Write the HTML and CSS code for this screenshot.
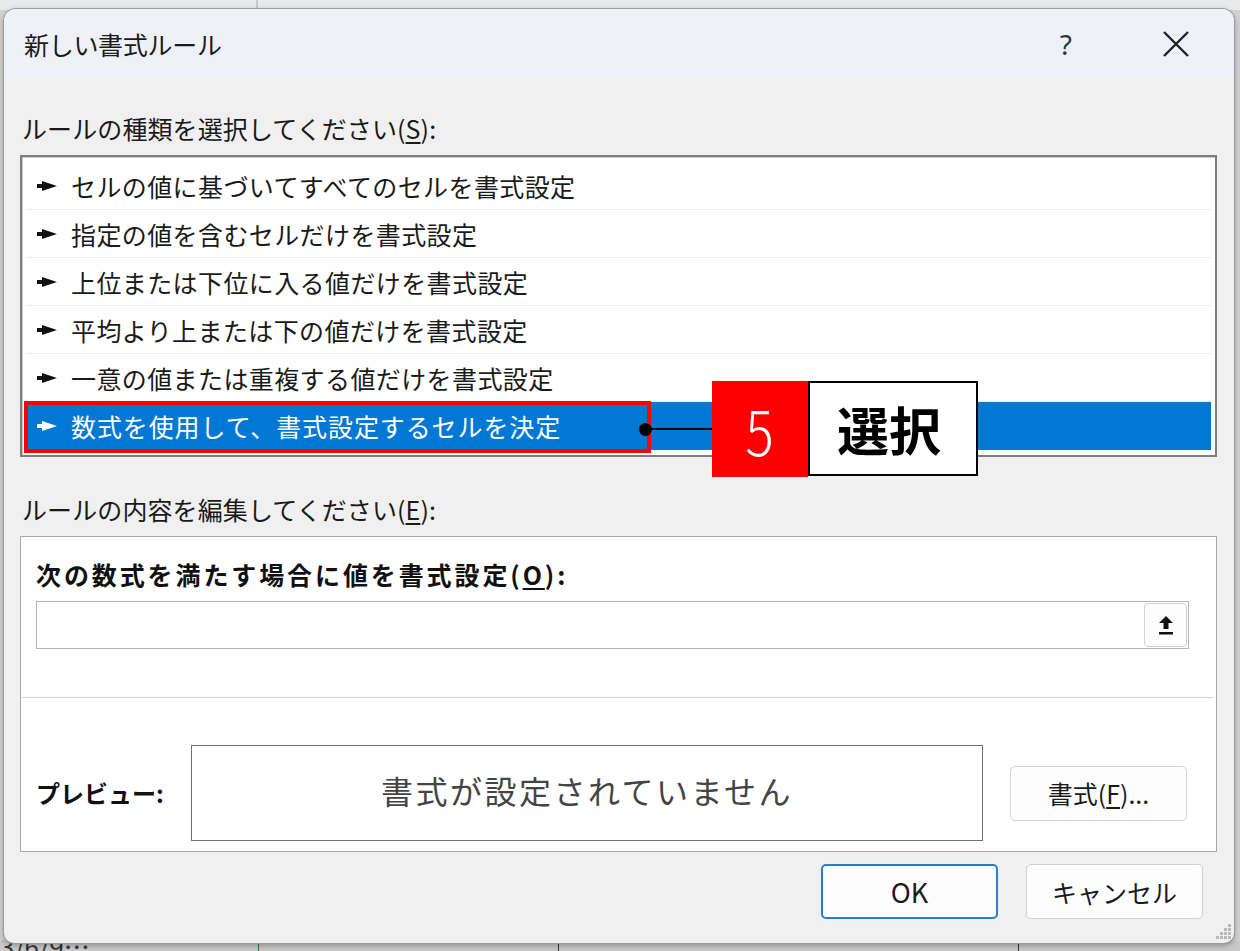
FILE: index.html
```html
<!DOCTYPE html>
<html lang="ja">
<head>
<meta charset="utf-8">
<title>新しい書式ルール</title>
<link rel="stylesheet" href="styles.css">
</head>
<body>
<div class="sheet">
  <div class="sheet-top"></div>
  <div class="sheet-bottom"><span class="sheet-text">3/6/9…</span></div>
</div>
<div class="dialog">
  <div class="titlebar">
    <div class="title">新しい書式ルール</div>
    <div class="tb-buttons">
      <span class="help">?</span>
      <svg class="close" width="28" height="28" viewBox="0 0 28 28"><path d="M2 2 L26 26 M26 2 L2 26" stroke="#222" stroke-width="2.4" fill="none"/></svg>
    </div>
  </div>
  <div class="body">
    <div class="label">ルールの種類を選択してください(<u>S</u>):</div>
    <div class="listbox">
      <div class="row"><svg class="ptr" viewBox="0 0 20 10"><path d="M0 3 H5 V0 L20 5 L5 10 V7 H0 Z"/></svg>セルの値に基づいてすべてのセルを書式設定</div>
      <div class="row"><svg class="ptr" viewBox="0 0 20 10"><path d="M0 3 H5 V0 L20 5 L5 10 V7 H0 Z"/></svg>指定の値を含むセルだけを書式設定</div>
      <div class="row"><svg class="ptr" viewBox="0 0 20 10"><path d="M0 3 H5 V0 L20 5 L5 10 V7 H0 Z"/></svg>上位または下位に入る値だけを書式設定</div>
      <div class="row"><svg class="ptr" viewBox="0 0 20 10"><path d="M0 3 H5 V0 L20 5 L5 10 V7 H0 Z"/></svg>平均より上または下の値だけを書式設定</div>
      <div class="row"><svg class="ptr" viewBox="0 0 20 10"><path d="M0 3 H5 V0 L20 5 L5 10 V7 H0 Z"/></svg>一意の値または重複する値だけを書式設定</div>
      <div class="row selected"><svg class="ptr" viewBox="0 0 20 10"><path d="M0 3 H5 V0 L20 5 L5 10 V7 H0 Z"/></svg>数式を使用して、書式設定するセルを決定</div>
      <div class="redbox"></div>
      <div class="callout">
        <span class="dot"></span>
        <span class="leader"></span>
        <span class="num"><span class="num-glyph">5</span></span>
        <span class="word">選択</span>
      </div>
    </div>
    <div class="label label2">ルールの内容を編集してください(<u>E</u>):</div>
    <div class="panel">
      <div class="bold-label">次の数式を満たす場合に値を書式設定(<u>O</u>):</div>
      <div class="input">
        <div class="ref-btn">
          <svg width="22" height="24" viewBox="0 0 22 24"><path d="M11 3 L18 10 H13.5 V16 H8.5 V10 H4 Z" fill="#111"/><rect x="4" y="19" width="14" height="2.5" fill="#111"/></svg>
        </div>
      </div>
      <div class="sep"></div>
      <div class="preview-row">
        <div class="bold-label prev-label">プレビュー:</div>
        <div class="preview">書式が設定されていません</div>
        <button class="btn fmt">書式(<u>F</u>)...</button>
      </div>
    </div>
    <div class="actions">
      <button class="btn ok">OK</button>
      <button class="btn">キャンセル</button>
    </div>
    <svg class="grip" width="16" height="16" viewBox="0 0 16 16" fill="#b8b8b8"><rect x="12" y="0" width="3" height="3"/><rect x="8" y="4" width="3" height="3"/><rect x="12" y="4" width="3" height="3"/><rect x="4" y="8" width="3" height="3"/><rect x="8" y="8" width="3" height="3"/><rect x="12" y="8" width="3" height="3"/><rect x="0" y="12" width="3" height="3"/><rect x="4" y="12" width="3" height="3"/><rect x="8" y="12" width="3" height="3"/><rect x="12" y="12" width="3" height="3"/></svg>
  </div>
</div>
</body>
</html>
```
FILE: styles.css
```css
* { box-sizing: border-box; }
html, body { margin: 0; padding: 0; }
body {
  width: 1240px;
  height: 951px;
  overflow: hidden;
  background: #d2d2d2;
  font-family: "Noto Sans CJK JP", "Noto Sans", sans-serif;
  color: #1a1a1a;
  position: relative;
}
.sheet { position: absolute; inset: 0; }
.sheet-top {
  height: 10px;
  background: #e9e9e9;
  background-image: linear-gradient(#c8c8c8, #c8c8c8);
  background-size: 2px 10px;
  background-position: 256px 0;
  background-repeat: no-repeat;
}
.sheet-bottom {
  position: absolute;
  left: 0; right: 0; bottom: 0;
  height: 10px;
  background: #c9c9c9;
  background-image: linear-gradient(#2e7d32, #2e7d32), linear-gradient(#333, #333), linear-gradient(#333, #333);
  background-size: 1px 10px, 1px 10px, 1px 10px;
  background-position: 258px 0, 558px 0, 1018px 0;
  background-repeat: no-repeat;
  overflow: hidden;
}
.sheet-text { position: absolute; left: 0; top: -14px; font-size: 26px; color: #333; }

.dialog {
  position: relative;
  margin: 9px 0 0 4px;
  width: 1230px;
  height: 934px;
  background: #f0f0f0;
  border-radius: 12px 12px 10px 10px;
  box-shadow: 0 0 0 1px #9a9a9a, 0 2px 6px rgba(0,0,0,0.35);
  overflow: hidden;
  display: flex;
  flex-direction: column;
}
.titlebar {
  height: 69px;
  background: #eef2f8;
  display: flex;
  align-items: center;
  justify-content: space-between;
  padding: 0 44px 0 20px;
}
.title { font-size: 25px; letter-spacing: -0.3px; color: #1a1a1a; }
.tb-buttons { display: flex; align-items: center; gap: 90px; }
.help { font-size: 28px; color: #333; font-family: "Noto Sans", sans-serif; }
.close { display: block; }

.body { flex: 1; position: relative; padding: 34px 17px 0 16px; }
.label { font-size: 25px; line-height: 32px; padding-left: 2px; color: #1a1a1a; letter-spacing: 0.1px; }
.label u, .bold-label u, .btn u { text-underline-offset: 3px; }
.listbox {
  position: relative;
  margin-top: 11px;
  height: 302px;
  background: #fff;
  border: 2px solid #7d7d7d;
  box-shadow: inset 1px 1px 0 #c8c8c8;
  padding: 5px 4px 0 4px;
}
.row {
  height: 48px;
  border-bottom: 1px solid #ececec;
  display: flex;
  align-items: center;
  font-size: 25px;
  letter-spacing: 0.4px;
  padding-left: 11px;
  color: #1a1a1a;
}
.ptr { width: 20px; height: 10px; margin-right: 14px; fill: #111; flex: none; }
.row.selected { background: #0078d4; color: #fff; border-bottom: 0; letter-spacing: 0.9px; }
.row.selected .ptr { fill: #fff; }
.redbox {
  position: absolute;
  left: 2px; top: 244px;
  width: 627px; height: 52px;
  border: 4px solid #ff0000;
}
.callout {
  position: absolute;
  left: 617px; top: 224px;
  display: flex;
  align-items: center;
  height: 96px;
}
.dot { width: 13px; height: 13px; border-radius: 50%; background: #000; flex: none; }
.leader { width: 62px; height: 2px; background: #000; flex: none; margin-left: -2px; }
.num {
  width: 96px; height: 96px;
  flex: none;
  background: #ff0000;
  color: #fff;
  display: flex; align-items: center; justify-content: center;
}
.num-glyph {
  display: block;
  font-family: "Noto Sans CJK JP", sans-serif;
  font-size: 62px;
  font-weight: 300;
  line-height: 1;
  transform: scaleX(0.85);
}
.word {
  width: 170px; height: 95px;
  flex: none;
  margin-top: -1px;
  background: #fff;
  border: 2px solid #000;
  font-size: 52px;
  font-weight: 700;
  color: #000;
  display: flex; align-items: center; justify-content: center;
  line-height: 1;
  padding-right: 8px;
}
.label2 { margin-top: 36px; }
.panel {
  margin-top: 11px;
  height: 316px;
  background: #fff;
  border: 1px solid #a9a9a9;
  padding: 22px 27px 0 15px;
}
.bold-label { font-size: 25px; font-weight: 700; line-height: 30px; color: #111; letter-spacing: 2.9px; }
.input {
  margin-top: 12px;
  height: 48px;
  border: 1px solid #b5b5b5;
  display: flex;
  justify-content: flex-end;
  align-items: center;
  padding-right: 1px;
}
.ref-btn {
  width: 43px; height: 44px;
  border: 1px solid #d0d0d0;
  border-radius: 4px;
  background: #fdfdfd;
  display: flex; align-items: center; justify-content: center;
}
.sep {
  margin: 48px -24px 0 -14px;
  height: 1px;
  background: #d4d4d4;
}
.preview-row { display: flex; align-items: center; margin-top: 47px; }
.prev-label { width: 155px; flex: none; letter-spacing: 0; font-size: 24px; }
.preview {
  width: 792px; height: 96px;
  border: 1px solid #6f6f6f;
  display: flex; align-items: center; justify-content: center;
  font-size: 32px;
  letter-spacing: 2.5px;
  color: #444;
  padding-bottom: 6px;
}
.btn {
  font-family: "Noto Sans CJK JP", "Noto Sans", sans-serif;
  font-size: 25px;
  color: #1a1a1a;
  width: 177px; height: 55px;
  background: #fdfdfd;
  border: 1px solid #d2d2d2;
  border-radius: 5px;
  padding: 0;
}
.fmt { margin-left: 27px; }
.actions { display: flex; justify-content: flex-end; gap: 28px; margin-top: 12px; padding-right: 14px; }
.ok { border: 2px solid #2a7ec6; font-size: 27px; }
.grip { position: absolute; right: 2px; bottom: 3px; }
```
